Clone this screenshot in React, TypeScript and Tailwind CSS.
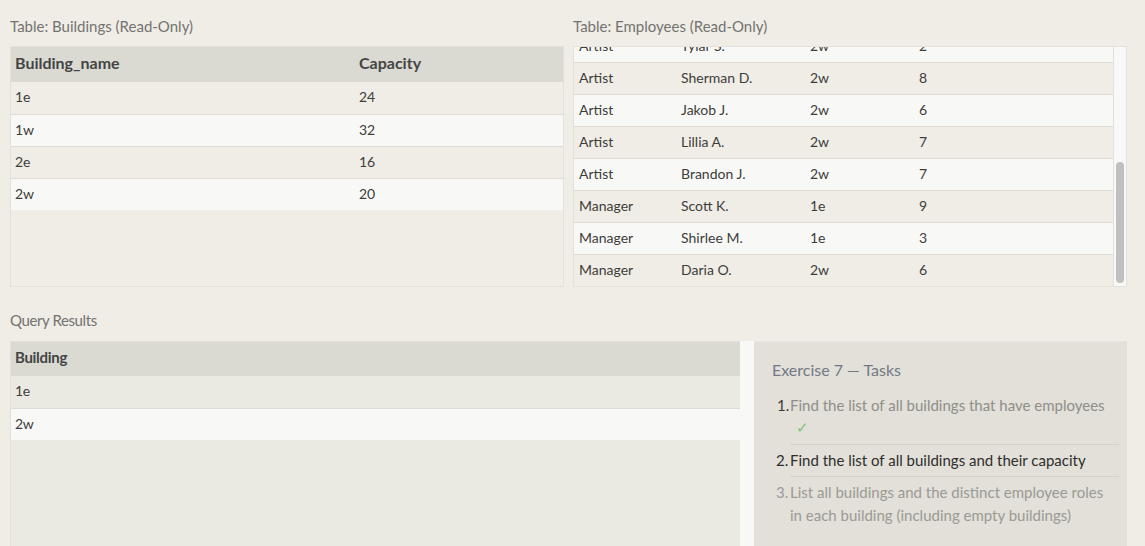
import { useEffect, useRef } from "react";

const buildings = [
  { name: "1e", capacity: 24 },
  { name: "1w", capacity: 32 },
  { name: "2e", capacity: 16 },
  { name: "2w", capacity: 20 },
];

const employees = [
  ["Engineer", "Becky A.", "1e", "4"],
  ["Engineer", "Dan B.", "1e", "2"],
  ["Engineer", "Sharon F.", "1e", "6"],
  ["Engineer", "Dan M.", "1e", "4"],
  ["Engineer", "Malcom S.", "1e", "1"],
  ["Artist", "Tylar S.", "2w", "2"],
  ["Artist", "Sherman D.", "2w", "8"],
  ["Artist", "Jakob J.", "2w", "6"],
  ["Artist", "Lillia A.", "2w", "7"],
  ["Artist", "Brandon J.", "2w", "7"],
  ["Manager", "Scott K.", "1e", "9"],
  ["Manager", "Shirlee M.", "1e", "3"],
  ["Manager", "Daria O.", "2w", "6"],
];

const results = ["1e", "2w"];

function Label({ children }: { children: string }) {
  return (
    <div className="h-[20px] leading-[20px] text-[15px] text-[#737370] mb-[10px]">
      {children}
    </div>
  );
}

function Row({ index, cols, children }: { index: number; cols: string; children: React.ReactNode }) {
  return (
    <div
      className={`grid ${cols} h-[32px] pb-[3px] items-center text-[14px] text-[#3d3d3a] ${
        index > 0 ? "border-t border-[#dedcd5]" : ""
      } ${index % 2 === 0 ? "bg-[#efede6]" : "bg-[#f8f8f7]"}`}
    >
      {children}
    </div>
  );
}

function EmployeesTable() {
  const scrollRef = useRef<HTMLDivElement>(null);

  useEffect(() => {
    if (scrollRef.current) {
      scrollRef.current.scrollTop = scrollRef.current.scrollHeight;
    }
  }, []);

  const cols = "grid-cols-[102px_129px_109px_1fr]";

  return (
    <div className="flex h-[241px] border border-[#e3e1da] bg-[#efede6]">
      <div ref={scrollRef} className="flex-1 overflow-hidden">
        <div className={`grid ${cols} h-[35px] pb-[3px] items-center bg-[#dadad2] text-[16px] font-bold text-[#444]`}>
          <div className="pl-[5px]">Role</div>
          <div className="pl-[5px]">Name</div>
          <div className="pl-[5px]">Building</div>
          <div className="pl-[5px]">Years_employed</div>
        </div>
        {employees.map((e, i) => (
          <Row key={i} index={i} cols={cols}>
            {e.map((v, j) => (
              <div key={j} className="pl-[5px]">
                {v}
              </div>
            ))}
          </Row>
        ))}
      </div>
      <div className="w-[13px] bg-[#f8f8f8] border-l border-[#e3e1da] flex flex-col pt-[115px] pb-[3px] items-center">
        <div className="w-[8px] flex-1 rounded-full bg-[#c0c0c0]" />
      </div>
    </div>
  );
}

export default function App() {
  return (
    <div className="w-[1145px] h-[546px] overflow-hidden bg-[#f0ede6] pl-[10px] pr-[18px] pt-[16px] font-['Lato',sans-serif]">
      <div className="grid grid-cols-2 gap-[9px]">
        <div>
          <Label>Table: Buildings (Read-Only)</Label>
          <div className="h-[241px] border border-[#e3e1da] bg-[#efede6]">
            <div className="grid grid-cols-[344px_1fr] h-[35px] pb-[3px] items-center bg-[#dadad2] text-[16px] font-bold text-[#444]">
              <div className="pl-[4px]">Building_name</div>
              <div className="pl-[4px]">Capacity</div>
            </div>
            {buildings.map((b, i) => (
              <Row key={b.name} index={i} cols="grid-cols-[344px_1fr]">
                <div className="pl-[4px]">{b.name}</div>
                <div className="pl-[4px]">{b.capacity}</div>
              </Row>
            ))}
          </div>
        </div>
        <div>
          <Label>Table: Employees (Read-Only)</Label>
          <EmployeesTable />
        </div>
      </div>

      <div className="mt-[23px]">
        <div className="h-[20px] leading-[20px] text-[15px] text-[#737370] mb-[11px] tracking-[-0.4px]">
          Query Results
        </div>
        <div className="flex h-[210px]">
          <div className="w-[730px] border-t border-l border-[#e3e1da] bg-[#ebeae2] tracking-[-0.3px]">
            <div className="h-[34px] pb-[3px] flex items-center pl-[4px] bg-[#dadad2] text-[15px] font-bold text-[#444]">
              Building
            </div>
            {results.map((r, i) => (
              <div
                key={r}
                className={`h-[32px] pb-[3px] flex items-center pl-[4px] text-[14px] text-[#3d3d3a] ${
                  i > 0 ? "border-t border-[#dedcd5] bg-[#f8f8f7]" : "bg-[#ebeae2]"
                }`}
              >
                {r}
              </div>
            ))}
          </div>
          <div className="w-[14px] bg-[#f8f8f7]" />
          <div className="flex-1 bg-[#e2e0d8] border-t border-[#e8e6e0] pl-[18px] pr-[8px] pt-[18px]">
            <div className="h-[20px] leading-[20px] text-[16px] text-[#737886]">Exercise 7 — Tasks</div>
            <div className="mt-[14px] text-[15px] leading-[22px]">
              <div className="flex">
                <span className="w-[18px] pl-[5px] text-[#3a3a38]">1.</span>
                <div className="flex-1 border-b border-[#d3d1ca] pb-[6px] text-[#8e8e8a]">
                  <div>Find the list of all buildings that have employees</div>
                  <div className="pl-[6px] text-[#7cc47c]">✓</div>
                </div>
              </div>
              <div className="flex">
                <span className="w-[18px] pl-[4px] pt-[4px] text-[#2e2e2c]">2.</span>
                <div className="flex-1 border-b border-[#d3d1ca] pt-[4px] pb-[5px] text-[#2e2e2c]">
                  Find the list of all buildings and their capacity
                </div>
              </div>
              <div className="flex">
                <span className="w-[18px] pl-[4px] pt-[4px] text-[#9a9a96]">3.</span>
                <div className="flex-1 pt-[4px] pr-[10px] text-[#9a9a96] leading-[23px]">
                  List all buildings and the distinct employee roles in each building (including empty buildings)
                </div>
              </div>
            </div>
          </div>
        </div>
      </div>
    </div>
  );
}
